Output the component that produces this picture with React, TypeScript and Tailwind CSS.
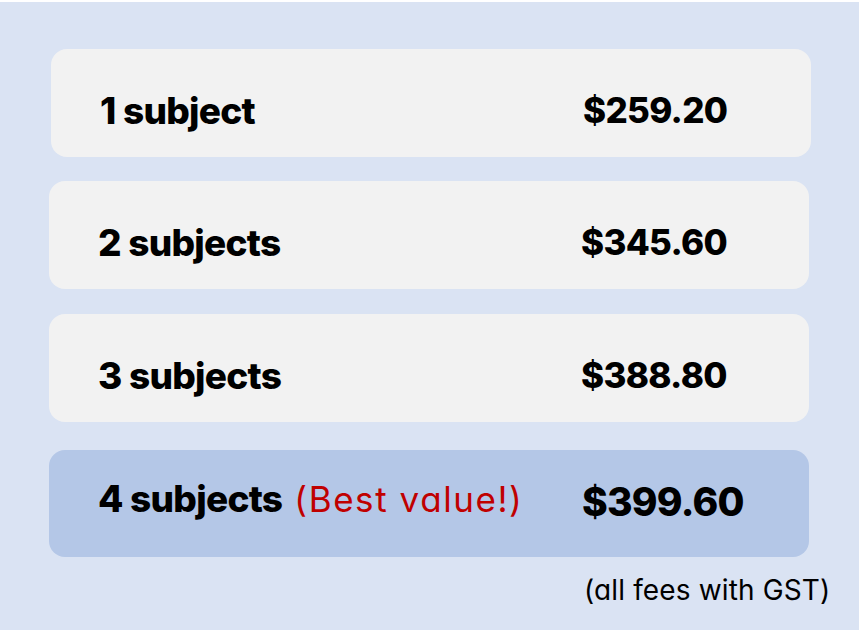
import React from "react"

const rows = [
  { label: "1 subject", price: "$259.20", shift: true },
  { label: "2 subjects", price: "$345.60" },
  { label: "3 subjects", price: "$388.80" },
]

export default function App() {
  return (
    <div className="w-[859px] h-[630px] bg-[#dae3f3] font-['Inter',sans-serif] text-black [font-feature-settings:'cv11']">
      <div className="h-[2px] bg-white" />
      <div className="pt-[47px] flex flex-col">
        {rows.map((row, i) => (
          <div
            key={i}
            className={
              "h-[108px] w-[760px] rounded-[16px] bg-[#f2f2f2] flex items-start pt-[43px] pl-[49px] " +
              (row.shift ? "ml-[51px] mb-[24px]" : i === 1 ? "ml-[49px] mb-[25px]" : "ml-[49px] mb-[28px]")
            }
          >
            <div className="w-[483px] text-[37px] leading-none font-extrabold tracking-[-0.02em]">{row.label}</div>
            <div className="mt-[1px] text-[35px] leading-none font-extrabold tracking-[-0.02em]">{row.price}</div>
          </div>
        ))}

        <div className="h-[107px] w-[760px] ml-[49px] rounded-[16px] bg-[#b4c7e7] flex items-start pt-[30px] pl-[49px]">
          <div className="w-[484px] flex items-baseline gap-[12px] leading-none">
            <span className="text-[37px] font-extrabold tracking-[-0.02em]">4 subjects</span>
            <span className="text-[35px] font-normal tracking-[0.045em] text-[#c00000]">(Best value!)</span>
          </div>
          <div className="mt-[2px] text-[39px] leading-none font-extrabold tracking-[-0.02em]">$399.60</div>
        </div>

        <div className="pl-[584px] pt-[19px] text-[28px] leading-none font-normal tracking-[0.005em]">(all fees with GST)</div>
      </div>
    </div>
  )
}
